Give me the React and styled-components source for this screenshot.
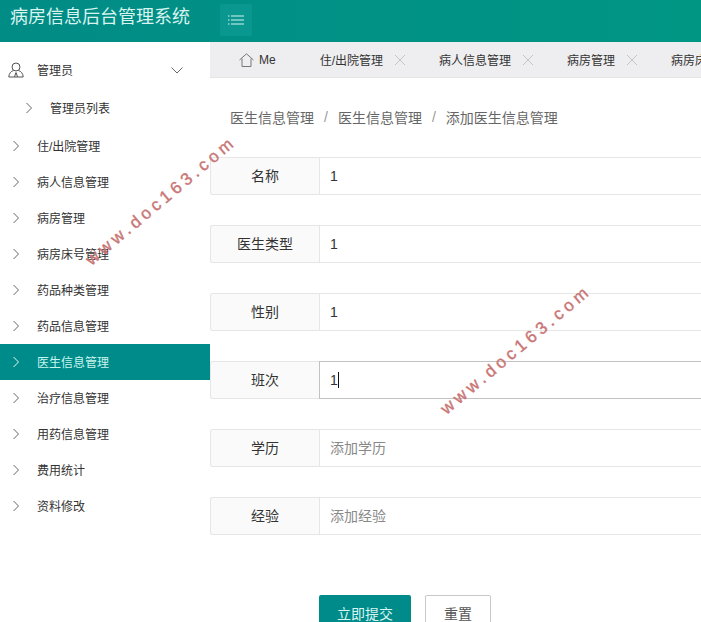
import styled, { createGlobalStyle } from "styled-components";

const menuItems = [
  "住/出院管理",
  "病人信息管理",
  "病房管理",
  "病房床号管理",
  "药品种类管理",
  "药品信息管理",
  "医生信息管理",
  "治疗信息管理",
  "用药信息管理",
  "费用统计",
  "资料修改",
];

const tabs = ["住/出院管理", "病人信息管理", "病房管理", "病房床号管理"];

const fields = [
  { label: "名称", value: "1" },
  { label: "医生类型", value: "1" },
  { label: "性别", value: "1" },
  { label: "班次", value: "1", focused: true },
  { label: "学历", placeholder: "添加学历" },
  { label: "经验", placeholder: "添加经验" },
];

const Chevron = ({ down }) => (
  <svg width="12" height="12" viewBox="0 0 12 12" fill="none" stroke="currentColor" strokeWidth="1">
    {down ? <path d="M0.5 3.5 L6 9 L11.5 3.5" /> : <path d="M3.5 1 L8.5 6 L3.5 11" />}
  </svg>
);

const App = () => {
  return (
    <Page>
      <GlobalStyle />
      <Header>
        <Title>病房信息后台管理系统</Title>
        <MenuToggle>
          <svg width="16" height="10" viewBox="0 0 16 10" fill="none" stroke="#d6f3ef" strokeWidth="1">
            <path d="M0 1 H1.5 M3 1 H16 M0 5 H1.5 M3 5 H16 M0 9 H1.5 M3 9 H16" />
          </svg>
        </MenuToggle>
      </Header>
      <Body>
        <Sidebar>
          <GroupRow>
            <UserIcon>
              <svg width="16" height="16" viewBox="0 0 16 16" fill="none" stroke="#555" strokeWidth="1">
                <circle cx="8" cy="5" r="4" />
                <path d="M5.5 8.5 C3 9.5 1 11 0.8 15 H15.2 C15 11 13 9.5 10.5 8.5" />
                <path d="M6.5 15 L8 10.5 L9.5 15" />
              </svg>
            </UserIcon>
            <GroupLabel>管理员</GroupLabel>
            <GroupArrow>
              <Chevron down />
            </GroupArrow>
          </GroupRow>
          <SubRow>
            <Arrow>
              <Chevron />
            </Arrow>
            <RowText>管理员列表</RowText>
          </SubRow>
          {menuItems.map((item) => {
            const active = item === "医生信息管理";
            return (
              <MenuRow key={item} $active={active}>
                <Arrow $active={active}>
                  <Chevron />
                </Arrow>
                <RowText>{item}</RowText>
              </MenuRow>
            );
          })}
        </Sidebar>
        <Main>
          <TabBar>
            <HomeTab>
              <svg width="15" height="14" viewBox="0 0 15 14" fill="none" stroke="#777" strokeWidth="1">
                <path d="M0.5 7 L7.5 0.8 L14.5 7 M3 5.5 V13.5 H12 V5.5" />
              </svg>
              Me
            </HomeTab>
            {tabs.map((tab) => (
              <Tab key={tab}>
                {tab}
                <svg width="10" height="10" viewBox="0 0 10 10" stroke="#c4c4c4" strokeWidth="1">
                  <path d="M0 0 L10 10 M10 0 L0 10" />
                </svg>
              </Tab>
            ))}
          </TabBar>
          <Breadcrumb>
            <span>医生信息管理</span>
            <Slash>/</Slash>
            <span>医生信息管理</span>
            <Slash>/</Slash>
            <span>添加医生信息管理</span>
          </Breadcrumb>
          <Form>
            {fields.map((field) => (
              <FormRow key={field.label}>
                <FieldLabel>{field.label}</FieldLabel>
                <FieldInput $focused={field.focused} $empty={!field.value}>
                  {field.value || field.placeholder}
                  {field.focused && <Caret />}
                </FieldInput>
              </FormRow>
            ))}
            <Actions>
              <SubmitButton>立即提交</SubmitButton>
              <ResetButton>重置</ResetButton>
            </Actions>
          </Form>
        </Main>
      </Body>
      <Watermark $left={66} $top={191}>www.doc163.com</Watermark>
      <Watermark $left={421} $top={340}>www.doc163.com</Watermark>
    </Page>
  );
};

const GlobalStyle = createGlobalStyle`
  html, body {
    margin: 0;
    padding: 0;
    background: #fff;
  }
  body {
    font-family: "Liberation Sans", "Noto Sans CJK SC", sans-serif;
    color: #333;
  }
`;

const Page = styled.div`
  position: relative;
  width: 701px;
  height: 622px;
  overflow: hidden;
`;

const Header = styled.div`
  height: 42px;
  box-sizing: border-box;
  padding-top: 4px;
  display: flex;
  align-items: flex-start;
  background: linear-gradient(to right, #018c86, #009684);
`;

const Title = styled.div`
  width: 220px;
  padding-left: 10px;
  box-sizing: border-box;
  font-size: 18px;
  line-height: 27px;
  color: #d9f3ef;
`;

const MenuToggle = styled.div`
  width: 32px;
  height: 32px;
  display: flex;
  align-items: center;
  justify-content: center;
  background: #0a9790;
  border-radius: 2px;
`;

const Body = styled.div`
  display: flex;
`;

const Sidebar = styled.div`
  width: 210px;
  flex-shrink: 0;
  padding-top: 10px;
  font-size: 12px;
  color: #333;
`;

const GroupRow = styled.div`
  height: 36px;
  display: flex;
  align-items: center;
  padding-left: 8px;
`;

const UserIcon = styled.span`
  width: 29px;
  display: flex;
`;

const GroupLabel = styled.span`
  flex: 1;
  margin-top: -2px;
`;

const GroupArrow = styled.span`
  display: flex;
  margin-right: 27px;
  color: #666;
`;

const SubRow = styled.div`
  height: 36px;
  margin: 2px 0;
  display: flex;
  align-items: center;
  padding-left: 23px;
`;

const MenuRow = styled.div`
  height: 36px;
  display: flex;
  align-items: center;
  padding-left: 10px;
  background: ${(p) => (p.$active ? "#008b8b" : "transparent")};
  color: ${(p) => (p.$active ? "#c8f5ee" : "#333")};
`;

const RowText = styled.span`
  margin-top: -2px;
`;

const Arrow = styled.span`
  width: 27px;
  display: flex;
  color: ${(p) => (p.$active ? "#e6fbf8" : "#666")};
`;

const Main = styled.div`
  flex: 1;
  min-width: 0;
`;

const TabBar = styled.div`
  height: 36px;
  display: flex;
  align-items: center;
  background: #eeeef0;
  border-bottom: 1px solid #e4e4e4;
  box-sizing: border-box;
  font-size: 12px;
  color: #333;
  white-space: nowrap;
  overflow: hidden;
  padding-left: 29px;
`;

const HomeTab = styled.div`
  display: flex;
  align-items: center;
  gap: 5px;
  margin-right: 44px;
`;

const Tab = styled.div`
  display: flex;
  align-items: center;
  gap: 12px;
  margin-right: 34px;
  flex-shrink: 0;
`;

const Breadcrumb = styled.div`
  display: flex;
  align-items: center;
  padding: 29px 0 0 20px;
  height: 20px;
  font-size: 14px;
  color: #666;
`;

const Slash = styled.span`
  margin: 0 10px;
  color: #999;
`;

const Form = styled.div`
  padding-top: 30px;
`;

const FormRow = styled.div`
  display: flex;
  height: 38px;
  margin-bottom: 30px;
  width: 600px;
  font-size: 14px;
`;

const FieldLabel = styled.div`
  width: 110px;
  box-sizing: border-box;
  padding-bottom: 2px;
  display: flex;
  align-items: center;
  justify-content: center;
  background: #fafafa;
  border: 1px solid #e6e6e6;
  border-radius: 2px 0 0 2px;
  color: #333;
`;

const FieldInput = styled.div`
  flex: 1;
  box-sizing: border-box;
  padding-bottom: ${(p) => (p.$empty ? "2px" : "0")};
  display: flex;
  align-items: center;
  margin-left: -1px;
  padding-left: 10px;
  background: #fff;
  border: 1px solid ${(p) => (p.$focused ? "#c2c2c2" : "#e6e6e6")};
  color: ${(p) => (p.$empty ? "#888" : "#333")};
`;

const Caret = styled.span`
  width: 1px;
  height: 16px;
  background: #111;
`;

const Actions = styled.div`
  display: flex;
  gap: 14px;
  padding: 30px 0 0 109px;
`;

const SubmitButton = styled.div`
  width: 92px;
  height: 38px;
  padding-bottom: 2px;
  box-sizing: border-box;
  display: flex;
  align-items: center;
  justify-content: center;
  background: #008b8b;
  color: #d8f5f0;
  border-radius: 2px;
  font-size: 14px;
`;

const ResetButton = styled.div`
  width: 66px;
  height: 38px;
  padding-bottom: 2px;
  box-sizing: border-box;
  display: flex;
  align-items: center;
  justify-content: center;
  background: #fff;
  border: 1px solid #c9c9c9;
  border-radius: 2px;
  color: #555;
  font-size: 14px;
`;

const Watermark = styled.div`
  position: absolute;
  left: ${(p) => p.$left}px;
  top: ${(p) => p.$top}px;
  font-family: "Liberation Sans", sans-serif;
  font-size: 17px;
  letter-spacing: 4.1px;
  color: #c97676;
  -webkit-text-stroke: 0.4px #c97676;
  white-space: nowrap;
  transform: rotate(-40deg);
  pointer-events: none;
`;

export default App;
